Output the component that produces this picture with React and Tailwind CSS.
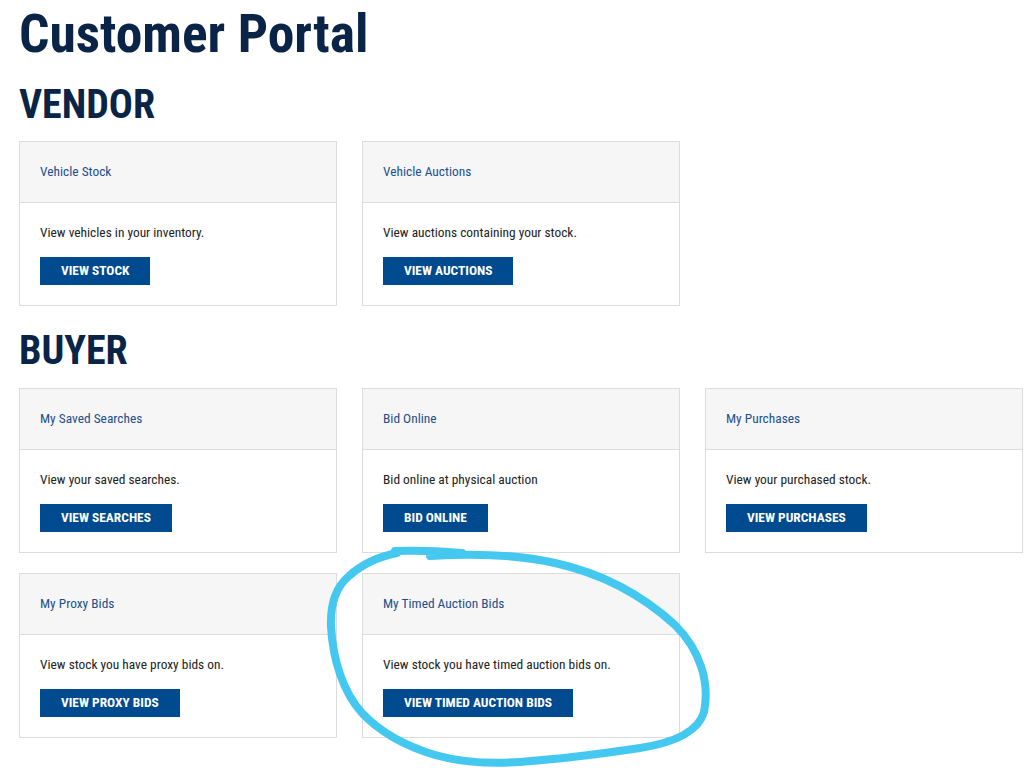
import React from "react";

const font = { fontFamily: '"Roboto Condensed", "Liberation Sans Narrow", "Roboto", sans-serif', fontStretch: "condensed" };

function Card({ title, text, button }) {
  return (
    <div className="border border-[#dcdcdc] bg-white">
      <div className="bg-[#f6f6f6] border-b border-[#dcdcdc] px-5 py-5 text-[13.4px] leading-5 text-[#1d4f8c]">{title}</div>
      <div className="p-5">
        <p className="text-[13.4px] leading-5 text-[#222]">{text}</p>
        <button className="mt-[14px] h-7 px-[21px] bg-[#004a8f] text-white text-[13.4px] font-bold uppercase leading-7">{button}</button>
      </div>
    </div>
  );
}

export default function App() {
  return (
    <div className="relative bg-white min-h-[768px] pl-[19px] overflow-hidden" style={font}>
      <h1 className="text-[53.5px] font-bold leading-[66px] text-[#0a2447] pt-[1px]">Customer Portal</h1>
      <h2 className="text-[40px] font-bold leading-[50px] text-[#0a2447] mt-[13px]">VENDOR</h2>
      <div className="grid grid-cols-[318px_318px_318px] gap-x-[25px] gap-y-[20px] mt-[11px]">
        <Card title="Vehicle Stock" text="View vehicles in your inventory." button="View Stock" />
        <Card title="Vehicle Auctions" text="View auctions containing your stock." button="View Auctions" />
      </div>
      <h2 className="text-[40px] font-bold leading-[50px] text-[#0a2447] mt-[20px]">BUYER</h2>
      <div className="grid grid-cols-[318px_318px_318px] gap-x-[25px] gap-y-[20px] mt-[12px]">
        <Card title="My Saved Searches" text="View your saved searches." button="View Searches" />
        <Card title="Bid Online" text="Bid online at physical auction" button="Bid Online" />
        <Card title="My Purchases" text="View your purchased stock." button="View Purchases" />
        <Card title="My Proxy Bids" text="View stock you have proxy bids on." button="View Proxy Bids" />
        <Card title="My Timed Auction Bids" text="View stock you have timed auction bids on." button="View Timed Auction Bids" />
      </div>
      <svg className="absolute left-0 top-0 pointer-events-none" width="1024" height="768" viewBox="0 0 1024 768">
        <path
          d="M395 551 C420 550 440 551 462 553 L430 556 C480 553 520 555 555 563 C600 573 640 593 675 625 C700 650 710 682 704 712 C698 733 672 743 640 748 C600 754 560 759 520 762 C490 764 460 762 435 755 C405 746 380 732 362 713 C343 692 333 660 331 627 C330 602 337 586 349 576 C361 565 377 557 397 553"
          fill="none"
          stroke="#45c8f0"
          strokeWidth="8"
          strokeLinecap="round"
          strokeLinejoin="round"
        />
      </svg>
    </div>
  );
}
